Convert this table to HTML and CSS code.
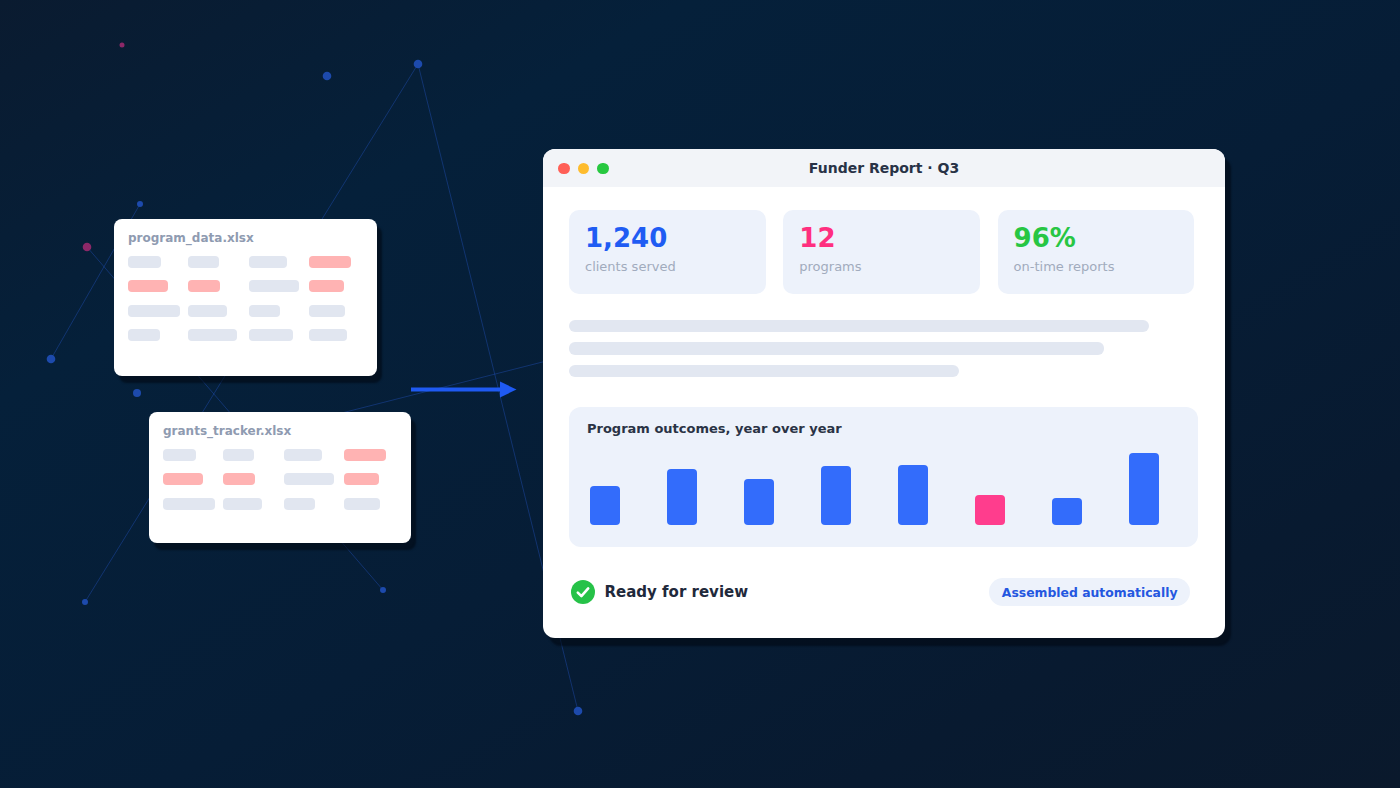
FILE: index.html
```html
<!DOCTYPE html>
<html lang="en">
<head>
<meta charset="utf-8">
<title>Funder Report</title>
<link rel="stylesheet" href="styles.css">
</head>
<body>
<div class="stage">
  <svg class="network" width="1400" height="788" viewBox="0 0 1400 788">
    <g class="links">
      <line x1="418" y1="64" x2="85" y2="602"/>
      <line x1="418" y1="64" x2="578" y2="711"/>
      <line x1="140" y1="204" x2="51" y2="359"/>
      <line x1="87" y1="247" x2="383" y2="590"/>
      <line x1="200" y1="449" x2="700" y2="322"/>
    </g>
    <g class="nodes">
      <circle cx="327" cy="76" r="4.3"/>
      <circle cx="418" cy="64" r="4.3"/>
      <circle cx="140" cy="204" r="3"/>
      <circle cx="51" cy="359" r="4.3"/>
      <circle cx="137" cy="393" r="4"/>
      <circle cx="85" cy="602" r="3"/>
      <circle cx="383" cy="590" r="3"/>
      <circle cx="578" cy="711" r="4.3"/>
    </g>
    <g class="nodes pink">
      <circle cx="122" cy="45" r="2.5"/>
      <circle cx="87" cy="247" r="4.3"/>
    </g>
  </svg>

  <div class="sheet sheet-one">
    <div class="sheet-title">program_data.xlsx</div>
    <div class="cells">
      <span class="cell" style="width:33px"></span>
      <span class="cell" style="width:31px"></span>
      <span class="cell" style="width:38px"></span>
      <span class="cell flag" style="width:42px"></span>
      <span class="cell flag" style="width:40px"></span>
      <span class="cell flag" style="width:32px"></span>
      <span class="cell" style="width:50px"></span>
      <span class="cell flag" style="width:35px"></span>
      <span class="cell" style="width:52px"></span>
      <span class="cell" style="width:39px"></span>
      <span class="cell" style="width:31px"></span>
      <span class="cell" style="width:36px"></span>
      <span class="cell" style="width:32px"></span>
      <span class="cell" style="width:49px"></span>
      <span class="cell" style="width:44px"></span>
      <span class="cell" style="width:38px"></span>
    </div>
  </div>

  <div class="sheet sheet-two">
    <div class="sheet-title">grants_tracker.xlsx</div>
    <div class="cells">
      <span class="cell" style="width:33px"></span>
      <span class="cell" style="width:31px"></span>
      <span class="cell" style="width:38px"></span>
      <span class="cell flag" style="width:42px"></span>
      <span class="cell flag" style="width:40px"></span>
      <span class="cell flag" style="width:32px"></span>
      <span class="cell" style="width:50px"></span>
      <span class="cell flag" style="width:35px"></span>
      <span class="cell" style="width:52px"></span>
      <span class="cell" style="width:39px"></span>
      <span class="cell" style="width:31px"></span>
      <span class="cell" style="width:36px"></span>
    </div>
  </div>

  <svg class="arrow" width="106" height="17" viewBox="0 0 106 17">
    <line x1="0" y1="8.5" x2="92" y2="8.5"/>
    <polygon points="89,0.5 105.5,8.5 89,16.5"/>
  </svg>

  <div class="report">
    <div class="titlebar">
      <div class="dots">
        <span class="dot red"></span>
        <span class="dot yellow"></span>
        <span class="dot green"></span>
      </div>
      <div class="win-title">Funder Report · Q3</div>
    </div>
    <div class="report-body">
      <div class="stats">
        <div class="stat">
          <div class="stat-num blue">1,240</div>
          <div class="stat-label">clients served</div>
        </div>
        <div class="stat">
          <div class="stat-num pink">12</div>
          <div class="stat-label">programs</div>
        </div>
        <div class="stat">
          <div class="stat-num green">96%</div>
          <div class="stat-label">on-time reports</div>
        </div>
      </div>

      <div class="text-lines">
        <span class="text-line" style="width:580px"></span>
        <span class="text-line" style="width:535px"></span>
        <span class="text-line" style="width:390px"></span>
      </div>

      <div class="chart">
        <div class="chart-title">Program outcomes, year over year</div>
        <div class="bars">
          <span class="bar" style="height:39px"></span>
          <span class="bar" style="height:56px"></span>
          <span class="bar" style="height:46px"></span>
          <span class="bar" style="height:59px"></span>
          <span class="bar" style="height:60px"></span>
          <span class="bar alt" style="height:30px"></span>
          <span class="bar" style="height:27px"></span>
          <span class="bar" style="height:72px"></span>
        </div>
      </div>

      <div class="footer">
        <div class="status">
          <svg class="check" width="24" height="24" viewBox="0 0 24 24">
            <circle cx="12" cy="12" r="12"/>
            <path d="M6.8 12.6 L10.4 16.1 L17.2 8.4"/>
          </svg>
          <span class="status-text">Ready for review</span>
        </div>
        <div class="badge">Assembled automatically</div>
      </div>
    </div>
  </div>
</div>
</body>
</html>
```

FILE: styles.css
```css
* { box-sizing: border-box; }

html, body {
  margin: 0;
  padding: 0;
}

body {
  font-family: "DejaVu Sans", "Noto Sans", sans-serif;
  background: #081a2f;
}

.stage {
  position: relative;
  width: 1400px;
  height: 788px;
  overflow: hidden;
  background: linear-gradient(150deg, #0a1b30 0%, #05203a 25%, #061d36 55%, #081a30 80%, #0a192c 100%);
}

.network {
  position: absolute;
  left: 0;
  top: 0;
}

.links line {
  stroke: rgba(40, 95, 220, 0.34);
  stroke-width: 1;
}

.nodes circle { fill: #1d4aac; }
.nodes.pink circle { fill: #8c2868; }

/* spreadsheet cards */
.sheet {
  position: absolute;
  background: #ffffff;
  border-radius: 8px;
  padding: 11.5px 14px 0 14px;
  box-shadow: 5px 7px 2px rgba(1, 8, 18, 0.6);
}

.sheet-one {
  left: 114px;
  top: 219px;
  width: 263px;
  height: 157px;
}

.sheet-two {
  left: 149px;
  top: 412px;
  width: 262px;
  height: 131px;
}

.sheet-title {
  font-size: 12px;
  line-height: 14px;
  font-weight: bold;
  color: #8f9bb1;
  margin-bottom: 11px;
}

.cells {
  display: grid;
  grid-template-columns: repeat(4, 60.4px);
  row-gap: 12.5px;
}

.cell {
  display: block;
  height: 12px;
  border-radius: 4px;
  background: #e1e6f0;
}

.cell.flag { background: #ffb3b3; }

/* arrow */
.arrow {
  position: absolute;
  left: 411px;
  top: 381px;
}

.arrow line {
  stroke: #1f5af2;
  stroke-width: 4;
}

.arrow polygon { fill: #1f5af2; }

/* report window */
.report {
  position: absolute;
  left: 543px;
  top: 149px;
  width: 682px;
  height: 489px;
  background: #ffffff;
  border-radius: 12px;
  box-shadow: 6px 8px 2px rgba(1, 8, 18, 0.6);
}

.titlebar {
  position: relative;
  height: 38px;
  background: #f2f4f8;
  border-radius: 12px 12px 0 0;
  display: flex;
  align-items: center;
  justify-content: center;
}

.dots {
  position: absolute;
  left: 15px;
  top: 13.5px;
  display: flex;
  gap: 8px;
}

.dot {
  width: 11.5px;
  height: 11.5px;
  border-radius: 50%;
}

.dot.red { background: #ff5f57; }
.dot.yellow { background: #febc2e; }
.dot.green { background: #28c840; }

.win-title {
  font-size: 14px;
  font-weight: bold;
  color: #283246;
}

.report-body {
  padding: 23px 27px 0 26px;
}

.stats {
  display: grid;
  grid-template-columns: repeat(3, 196.5px);
  column-gap: 17.8px;
}

.stat {
  height: 83.5px;
  background: #edf2fb;
  border-radius: 10px;
  padding: 12.5px 16px 0 16px;
}

.stat-num {
  font-size: 26px;
  line-height: 30px;
  font-weight: bold;
}

.stat-num.blue { color: #1f5cf3; }
.stat-num.pink { color: #ff2f7f; }
.stat-num.green { color: #27c643; }

.stat-label {
  margin-top: 6px;
  font-size: 13px;
  line-height: 16px;
  color: #a1abbd;
}

.text-lines {
  margin-top: 26px;
  display: flex;
  flex-direction: column;
  gap: 10px;
}

.text-line {
  display: block;
  height: 12.5px;
  border-radius: 6px;
  background: #e2e7f1;
}

.chart {
  margin-top: 30px;
  height: 140px;
  background: #edf2fb;
  border-radius: 12px;
  padding: 13.5px 18px 21.7px 18px;
  display: flex;
  flex-direction: column;
}

.chart-title {
  font-size: 13px;
  line-height: 16px;
  font-weight: bold;
  color: #2a3345;
}

.bars {
  flex: 1;
  display: flex;
  align-items: flex-end;
  gap: 47px;
  padding-left: 3px;
}

.bar {
  display: block;
  width: 30px;
  border-radius: 4px;
  background: #336cfb;
}

.bar.alt { background: #ff3d8d; }

.footer {
  margin-top: 31px;
  height: 28px;
  display: flex;
  align-items: center;
  justify-content: space-between;
  padding: 0 8px 0 1.5px;
}

.status {
  display: flex;
  align-items: center;
  gap: 10px;
}

.check circle { fill: #26c248; }

.check path {
  fill: none;
  stroke: #ffffff;
  stroke-width: 2.6;
  stroke-linecap: round;
  stroke-linejoin: round;
}

.status-text {
  font-size: 15px;
  font-weight: bold;
  color: #1f293b;
}

.badge {
  height: 28px;
  padding: 0 12.5px;
  display: flex;
  align-items: center;
  background: #edf2fb;
  border-radius: 14px;
  font-size: 12.4px;
  font-weight: bold;
  color: #2457e0;
}
```
